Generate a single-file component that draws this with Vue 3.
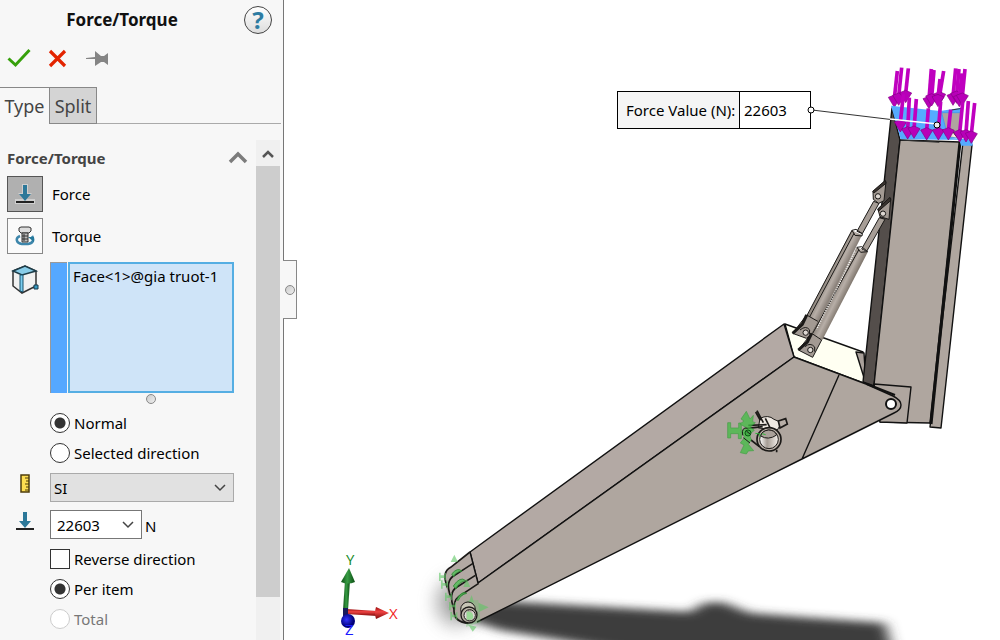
<script setup>
import { ref } from 'vue'

const tab = ref('Type')
const kind = ref('Force')
const direction = ref('normal')
const unit = ref('SI')
const value = ref('22603')
const reverse = ref(false)
const scope = ref('item')

// Load arrows: top x, top y, tip x, tip y
const backArrows = [
  [112, 48, 103, 154], [125, 38, 116, 148], [145, 40, 137, 140],
  [214, 42, 207, 158], [222, 45, 215, 150], [251, 48, 239, 144], [240, 72, 234, 152],
  [287, 40, 279, 148], [297, 42, 290, 142], [306, 55, 298, 152], [315, 42, 307, 148],
]
const frontArrows = [
  [130, 118, 121, 228], [148, 128, 143, 249], [169, 132, 162, 247],
  [205, 160, 200, 252], [242, 140, 235, 252], [272, 164, 265, 252],
  [308, 142, 299, 258], [325, 138, 318, 258], [344, 144, 334, 262],
]
const fingers = [
  'M382 142Q364 96 392 82L450 36',
  'M392 170Q374 122 404 106L459 70',
  'M402 208Q384 158 410 142L466 106',
  'M445 250Q404 246 402 214 400 182 416 170L476 130',
]
const marks = [[362, 110], [368, 133], [380, 170], [392, 198], [396, 228]]
</script>

<template>
  <main class="app">
    <aside class="panel">
      <header class="head">
        <h1>Force/Torque</h1>
        <button class="help" aria-label="Help">?</button>
      </header>
      <div class="actions">
        <button aria-label="OK">
          <svg width="24" height="24" viewBox="0 0 24 24"><path d="M1.500 11.500 8.500 18 22.500 3" fill="none" stroke="#36a00b" stroke-width="3" /></svg>
        </button>
        <button aria-label="Cancel">
          <svg width="24" height="24" viewBox="0 0 24 24"><path d="M4 4 19 19M19 4 4 19" fill="none" stroke="#e32400" stroke-width="3.200" /></svg>
        </button>
        <button aria-label="Keep visible">
          <svg width="24" height="24" viewBox="0 0 24 24"><path d="M1 11 10 10V4l6 5h3l4-3v12l-4-3h-3l-6 4v-7L1 12z" fill="#858585" /></svg>
        </button>
      </div>
      <nav class="tabs">
        <button :class="{ on: tab === 'Type' }" @click="tab = 'Type'">Type</button>
        <button :class="{ on: tab === 'Split' }" @click="tab = 'Split'">Split</button>
      </nav>

      <div class="body">
        <section class="group">
          <div class="group-head">
            <h2>Force/Torque</h2>
            <button aria-label="Collapse">
              <svg width="20" height="14" viewBox="0 0 20 14"><path d="M2 11 10 3l8 8" fill="none" stroke="#7c7c7c" stroke-width="3.500" /></svg>
            </button>
          </div>
          <div class="kind">
            <button id="force" :class="{ on: kind === 'Force' }" @click="kind = 'Force'">
              <svg width="20" height="20" viewBox="0 0 20 20"><path d="M7 0H13V9H17L10 17 3 9H7zM0 15H20V20H0z" fill="#ddd" opacity=".7" /><path d="M8 1h4v9h4l-6 7-6-7h4z" fill="#2c7899" /><path d="M1 17h18v2H1z" fill="#222" /></svg>
            </button>
            <label for="force">Force</label>
          </div>
          <div class="kind">
            <button id="torque" :class="{ on: kind === 'Torque' }" @click="kind = 'Torque'">
              <svg width="20" height="20" viewBox="0 0 20 20">
                <path d="M5 10C0 12 1 17 7 18h6c6-1 6-5 4-8" fill="none" stroke="#3d86ab" stroke-width="2.500" />
                <path d="M13 11h6v5z" fill="#24789b" />
                <path d="M4 2 6 1h8l2 1v3l-2 2H6L4 5z" fill="#ddd" stroke="#333" />
                <path d="M7 7h6v9H7z" fill="#bbb" stroke="#333" /><path d="M7 10h6M7 13h6M9 8v7" stroke="#333" />
              </svg>
            </button>
            <label for="torque">Torque</label>
          </div>

          <div class="pick">
            <svg width="28" height="30" viewBox="0 0 28 30">
              <path d="M2 6 14 1 25 6V21L11 28 2 21z" fill="#f1f1f1" stroke="#333" stroke-width="1.500" />
              <path d="M2 6 14 1 25 6 11 10z" fill="#88cde9" stroke="#1d3c48" stroke-width="1.500" />
              <path d="M9 10h3v17l-3-1z" fill="#7bcdf0" stroke="#17506b" /><path d="M23 20h4v4h-4z" fill="#379bc3" stroke="#16384a" />
            </svg>
            <div class="selection">
              <span class="swatch"></span>
              <ul role="listbox" aria-label="Faces"><li role="option" aria-selected="true">Face&lt;1&gt;@gia truot-1</li></ul>
            </div>
          </div>
          <span class="dot"></span>

          <div class="fields">
            <label class="option"><input v-model="direction" type="radio" name="direction" value="normal" />Normal</label>
            <label class="option"><input v-model="direction" type="radio" name="direction" value="selected" />Selected direction</label>
          </div>

          <div class="row">
            <svg width="12" height="20" viewBox="0 0 12 20"><path d="M2 1h8v17H2z" fill="#fddd51" stroke="#4d3c0b" stroke-width="1.500" /><path d="M6 4h4M7 7h3M6 10h4M7 13h3M6 16h4" stroke="#4d3c0b" /></svg>
            <div class="combo unit">
              <select v-model="unit" aria-label="Unit system"><option>SI</option><option>English</option></select>
              <svg width="14" height="8" viewBox="0 0 14 8"><path d="M2 1 7 6l5-5" fill="none" stroke="#444" stroke-width="1.500" /></svg>
            </div>
          </div>
          <div class="row">
            <svg width="20" height="20" viewBox="0 0 20 20"><path d="M8 1h4v9h4l-6 7-6-7h4z" fill="#2c7899" /><path d="M1 17h18v2H1z" fill="#222" /></svg>
            <div class="combo amount">
              <input v-model="value" aria-label="Force value" />
              <svg width="14" height="8" viewBox="0 0 14 8"><path d="M2 1 7 6l5-5" fill="none" stroke="#444" stroke-width="1.500" /></svg>
            </div>
            <span class="suffix">N</span>
          </div>

          <div class="fields last">
            <label class="option"><input v-model="reverse" type="checkbox" />Reverse direction</label>
            <label class="option"><input v-model="scope" type="radio" name="scope" value="item" />Per item</label>
            <label class="option off"><input v-model="scope" type="radio" name="scope" value="total" disabled />Total</label>
          </div>
        </section>
        <div class="scroll">
          <button aria-label="Scroll up"><svg width="14" height="10" viewBox="0 0 14 10"><path d="M2 9 7 4l5 5" fill="none" stroke="#555" stroke-width="2.500" /></svg></button>
          <div class="thumb"></div>
        </div>
      </div>
      <button class="handle" aria-label="Resize panel"><span class="dot"></span></button>
    </aside>

    <section class="stage">
      <svg class="model" viewBox="284 0 716 640" preserveAspectRatio="xMinYMin meet">
        <defs>
          <filter id="soft" filterUnits="userSpaceOnUse" x="400" y="540" width="600" height="180"><feGaussianBlur stdDeviation="7 4" /></filter>
          <filter id="wide" filterUnits="userSpaceOnUse" x="360" y="520" width="200" height="180"><feGaussianBlur stdDeviation="9" /></filter>
          <linearGradient id="tubeA" gradientUnits="userSpaceOnUse" x1="146" y1="310" x2="180" y2="327"><stop offset="0" stop-color="#8d857d" /><stop offset=".5" stop-color="#b7aea7" /><stop offset="1" stop-color="#857c75" /></linearGradient>
          <linearGradient id="tubeB" gradientUnits="userSpaceOnUse" x1="162" y1="360" x2="196" y2="377"><stop offset="0" stop-color="#8d857d" /><stop offset=".5" stop-color="#b7aea7" /><stop offset="1" stop-color="#81786f" /></linearGradient>
          <linearGradient id="bore"><stop offset="0" stop-color="#fff" /><stop offset=".4" stop-color="#a69d95" /><stop offset="1" stop-color="#f5f0ec" /></linearGradient>
          <linearGradient id="green"><stop offset="0" stop-color="#0b4d13" /><stop offset=".45" stop-color="#379c43" /><stop offset="1" stop-color="#0b4d13" /></linearGradient>
          <linearGradient id="red" x2="0" y2="1"><stop offset="0" stop-color="#9b0c0c" /><stop offset=".4" stop-color="#f04444" /><stop offset="1" stop-color="#7d0808" /></linearGradient>
          <radialGradient id="ball" cx=".4" cy=".4"><stop offset="0" stop-color="#3434ff" /><stop offset="1" stop-color="#000077" /></radialGradient>
        </defs>

        <ellipse cx="456" cy="602" rx="20" ry="24" fill="#777" opacity=".6" filter="url(#wide)" />
        <path d="M455 602 500 601 690 612 704 603 722 602 750 613 800 617 885 623 895 660H680L500 630 470 620z" fill="#3d3d3d" filter="url(#soft)" />

        <g class="edge">
          <path d="M785 324 863 352 866 384 794 357z" fill="#fffff2" />
          <path d="M856 352 864 353 866 384z" fill="#aaa19b" />
          <path d="M892 108 900 140 874 386 863 382z" fill="#544e4b" />
          <path d="M900 140 960 142 930 423 880 422 874 385z" fill="#afa69f" />
          <path d="M963 142 972 145 941 428 930 427z" fill="#afa69f" />
          <path d="M960 142 931 424" stroke-width="3" />
          <path d="M874 384 911 387 907 423 880 422z" fill="#afa69f" />
          <path d="M470 552 784 324 794 357 478 583z" fill="#b3a9a4" />
          <path d="M470 552 451 567C443 571 444 582 447 590L450 610Q455 624 467 623L477 621 478 583z" fill="#b3a9a4" stroke="none" />
          <path d="M478 583 794 357 866 384 893 396Q901 400 901 405T894 413L802 459 477 622Q455 625 454 610 452 598 459 596z" fill="#afa69f" stroke="none" />
          <path d="M478 583 794 357 866 384 893 396Q901 400 901 405T894 413L802 459 477 622M470 552 478 583M839 375 802 459" fill="none" />
          <path d="M867 384 895 395" stroke-width="2" />
          <circle cx="891" cy="404" r="5" fill="#fff" stroke-width="2" />
        </g>

        <!-- hydraulic cylinders -->
        <g class="fine" transform="translate(780 170) scale(.33333)">
          <path d="M281 94 231 184 247 191 297 100z" fill="#a69d96" />
          <path d="M215 181 246 195 116 459 79 440z" fill="url(#tubeA)" stroke="none" />
          <path d="M216 181 80 438M222 190 86 446M216 181 228 178 247 191 246 198 225 196z" fill="none" />
          <path d="M318 35 279 65 280 88 296 100 312 92z" fill="#a39a93" /><path d="M278 64 316 31 318 40 282 69z" fill="#39332f" />
          <path d="M80 435 38 490 79 505 96 492 115 455z" fill="#a39a93" /><path d="M80 435 67 463 38 490" stroke-width="9" fill="none" />
          <path d="M298 143 245 237 260 244 315 148z" fill="#a69d96" />
          <path d="M230 232 263 247 127 510 94 491z" fill="url(#tubeB)" stroke="none" />
          <path d="M236 240 98 490M231 232 245 230 263 245 242 247z" fill="none" />
          <path d="M225 245 110 478" stroke="#fff" stroke-width="4" stroke-dasharray="3 4" />
          <path d="M332 85 294 118 300 140 327 148z" fill="#a39a93" /><path d="M293 117 330 82 333 91 296 123z" fill="#39332f" />
          <path d="M95 490 55 540 98 562 125 510z" fill="#a39a93" /><path d="M95 490 82 516 55 540" stroke-width="9" fill="none" />
          <g fill="#ded8d2"><circle cx="294" cy="79" r="8" /><circle cx="309" cy="131" r="8" /><circle cx="77" cy="488" r="8" /><circle cx="91" cy="540" r="8" /></g>
          <path d="M60 480Q78 465 89 480L88 493M75 530Q91 516 104 531L104 545" fill="none" />
        </g>

        <!-- loaded face and force arrows -->
        <g transform="translate(860 55) scale(.33333)">
          <g v-for="(a, i) in backArrows" :key="'b' + i" class="load">
            <path :d="`M${a[0]} ${a[1]} L${a[2]} ${a[3] - 24}`" />
            <path class="cone" :d="`M${a[2] - 18} ${a[3] - 27}l18-7 18 8-18 29z`" />
          </g>
          <path d="M93 152 240 168 305 158V173H245L264 248 338 254V272H303L298 254H240L122 253z" fill="#55aaff" />
          <path d="M245 173H304L300 248 264 248z" fill="#afa69f" stroke="#4499e8" stroke-width="3" />
          <path d="M264 242 278 230 292 248" fill="#f4eadd" stroke="#222" stroke-width="3" />
          <path d="M122 255 238 262M275 165 306 160" fill="none" stroke="#333" stroke-width="3" />
          <g v-for="(a, i) in frontArrows" :key="'f' + i" class="load">
            <path :d="`M${a[0]} ${a[1]} L${a[2]} ${a[3] - 24}`" />
            <path class="cone" :d="`M${a[2] - 18} ${a[3] - 27}l18-7 18 8-18 29z`" />
          </g>
        </g>
        <path d="M812 110 895 120" stroke="#333" />
        <path d="M890 119 937 124" stroke="#fff" stroke-width="1.500" />
        <circle cx="937" cy="125" r="3" fill="#eee" stroke="#000" />

        <!-- lug with bushing and fixture -->
        <g class="fine" transform="translate(700 340) scale(.33333)">
          <path d="M180 235Q205 223 222 238L245 248 232 270 175 264z" fill="#eee8e1" />
          <path d="M235 243 257 236 262 252 240 264z" fill="#b7aea7" stroke-width="5" />
          <path d="M171 212 190 248M167 216 181 241" stroke-width="5" />
          <path d="M145 256 200 254M143 265 188 260M153 300 178 320M196 235 212 267M230 329V337" stroke-width="5" />
          <ellipse cx="207" cy="298" rx="36" ry="35" fill="#bcb2aa" stroke-width="5" />
          <ellipse cx="207" cy="298" rx="28" ry="28" fill="url(#bore)" stroke-width="3" />
          <path d="M182 288Q205 302 230 285Q224 270 205 270 185 273 182 288z" fill="#aaa19a" />
          <g fill="#42bd43" stroke="#239b2a" stroke-width="2" opacity=".75">
            <path d="M83 248H92V264H116V249H124V296H115V281H92V294H83z" />
            <path d="M139 214 150 237 160 226 158 245 166 248 151 261 163 271 148 283 154 299 145 313 161 332 145 333 139 342 121 338 132 315 121 309 134 292 124 275 139 263 120 252 132 243 123 237z" />
          </g>
          <circle cx="144" cy="279" r="9" fill="#41a844" stroke="#065a10" /><path d="M128 286Q124 259 143 265M130 293 150 309M139 273 150 282" fill="none" />
          <path d="M166 280 180 282 179 290M186 281 197 284" stroke="#31b63b" fill="none" />
        </g>

        <!-- hinge fingers and their fixtures -->
        <g class="fine" transform="translate(320 540) scale(.33333)">
          <path v-for="f in fingers" :key="f" :d="f" fill="none" stroke-width="5" />
          <g fill="#57bd5b" stroke="#2a8d30" opacity=".85">
            <path d="M395 102Q414 80 426 94 408 94 401 110zM400 138Q421 107 437 122 417 125 408 147zM410 180Q423 151 440 160 422 164 415 181z" />
          </g>
          <g fill="#5fc764" stroke="none" opacity=".6">
            <path d="M403 44 414 66H392zM440 116 451 141H430zM455 165 462 187H446zM475 188 506 202 477 216zM445 254 470 260 458 275z" />
            <path v-for="(m, i) in marks" :key="i" :d="`M${m[0] - 5} ${m[1] - 12}h5v8h12v-7h4v22h-4v-7h-12v9h-5z`" />
            <path d="M440 182 475 180 482 247 438 261z" opacity=".5" />
          </g>
          <circle cx="444" cy="208" r="22" fill="#c7c5b5" /><circle cx="447" cy="225" r="24" fill="#b9b3a6" stroke-width="4" /><circle cx="449" cy="226" r="17" fill="url(#bore)" /><path d="M440 215Q455 212 459 225T450 239H440z" fill="#9ada96" stroke="none" />
        </g>

        <!-- axis triad -->
        <path d="M345 580H350L348 611H343z" fill="url(#green)" /><path d="M349 568 355 582Q348 585 341 582z" fill="url(#green)" />
        <path d="M346 609 377 611V616L346 614z" fill="url(#red)" /><path d="M376 607 389 613 376 619Q374 613 376 607z" fill="url(#red)" />
        <path d="M343 608H348V620H343z" fill="#19195c" /><circle cx="348" cy="621" r="7" fill="url(#ball)" />
        <g class="axis"><text x="346" y="565" fill="#178a27">Y</text><text x="389" y="619" fill="#f12222">X</text><text x="345" y="635" fill="#1a1aff">Z</text></g>

        <foreignObject x="617" y="91" width="194" height="38">
          <label class="callout"><span>Force Value (N):</span><input v-model="value" /></label>
        </foreignObject>
        <circle cx="811" cy="110" r="3" fill="#fff" stroke="#000" />
      </svg>
    </section>
  </main>
</template>

<style scoped>
.app { display: flex; min-height: 100vh; background: #fff; color: #000; font: 15px/20px "Noto Sans", "Open Sans", sans-serif; }
button, input, select { font: inherit; color: inherit; margin: 0; padding: 0; box-sizing: border-box; }
button { background: none; border: 0; display: flex; align-items: center; justify-content: center; }
svg { display: block; flex: none; }
.panel { position: relative; display: flex; flex-direction: column; box-sizing: border-box; width: 284px; flex: none; background: #f7f7f7; border-right: 1px solid #777; }
.head { display: flex; align-items: center; height: 40px; padding-right: 11px; }
h1 { flex: 1; margin: 0; text-align: center; font-size: 17px; font-weight: 700; color: #111; }
.help { width: 28px; height: 28px; border: 1px solid #444; border-radius: 50%; background: linear-gradient(#fff, #ddd); color: #2d7ca2; font-size: 24px; font-weight: 700; line-height: 26px; }
.actions { display: flex; gap: 15px; height: 47px; align-items: center; padding: 0 7px 10px; box-sizing: border-box; }
.tabs { display: flex; height: 37px; margin-right: 2px; color: #444; font-size: 18px; }
.tabs::after { content: ""; flex: 1; border-bottom: 1px solid #aaa; }
.tabs button { width: 48px; border: 1px solid #888; background: #d4d4d4; }
.tabs button.on { width: 49px; background: none; border-width: 1px 0 0; }
.body { display: flex; flex: 1; margin-top: 16px; }
.group { flex: 1; padding-left: 7px; }
.group-head { display: flex; align-items: center; justify-content: space-between; height: 36px; padding-right: 8px; }
h2 { margin: 0; font-size: 15px; font-weight: 700; color: #444; }
.kind { display: flex; align-items: center; gap: 9px; margin-bottom: 6px; }
.kind button { width: 36px; height: 36px; border: 1px solid #888; background: #fafafa; }
.kind button.on { background: #b0b0b0; border-color: #555; }
.pick { display: flex; gap: 11px; margin-top: 8px; padding: 0 22px 0 4px; }
.pick svg { margin-top: 3px; }
.selection { display: flex; flex: 1; height: 131px; gap: 1px; }
.swatch { width: 17px; background: #55a8ff; border: solid #999; border-width: 1px 0 0 1px; box-sizing: border-box; }
ul { flex: 1; margin: 0; padding: 2px 3px; list-style: none; background: #cfe4f8; border: 2px solid #55aee3; box-sizing: border-box; white-space: nowrap; }
.dot { display: block; box-sizing: border-box; width: 10px; height: 10px; border: 1px solid #888; border-radius: 50%; background: linear-gradient(135deg, #ccc, #eee); }
.group > .dot { margin: 1px 0 4px 139px; }
.fields { padding-left: 43px; }
.option { display: flex; align-items: center; gap: 4px; height: 30px; }
.option input { appearance: none; width: 20px; height: 20px; border: 1px solid #333; background: #fff; }
.option input[type="radio"] { border-radius: 50%; }
.option input[type="radio"]:checked { background: radial-gradient(circle, #333 0 5px, #fff 6px); }
.option input[type="checkbox"]:checked { background: #333; }
.off { color: #777; }
.option.off input { border-color: #ccc; }
.row { display: flex; align-items: center; margin-top: 5px; padding-right: 22px; }
.row + .row { margin-top: 8px; }
.row > svg { width: 36px; margin: 0 7px 8px 0; }
.combo { display: grid; align-items: center; }
.combo > * { grid-area: 1 / 1; }
.combo svg { justify-self: end; margin-right: 7px; pointer-events: none; }
.combo select, .combo input { appearance: none; width: 100%; height: 29px; border: 1px solid #777; border-radius: 0; background: #fff; padding-left: 6px; }
.unit { flex: 1; }
.combo select { background: #e1e1e1; border-color: #aaa; padding-left: 3px; }
.amount { width: 92px; }
.suffix { margin-left: 3px; padding-top: 3px; }
.last { margin-top: 5px; }
.scroll { width: 24px; margin-right: 3px; background: #f0f0f0; }
.scroll button { width: 24px; height: 26px; }
.thumb { height: 431px; background: #cdcdcd; }
.handle { position: absolute; left: 283px; top: 260px; width: 14px; height: 59px; border: 1px solid #888; border-left: 0; background: #f7f7f7; }
.stage { flex: 1; min-width: 0; }
.model { width: 100%; height: auto; }
.edge { stroke: #111; stroke-width: 1.400; stroke-linejoin: round; }
.fine { stroke: #1b1917; stroke-width: 3; }
.load { stroke: #bf00bf; stroke-width: 11; fill: none; }
.load .cone { fill: #b800b8; stroke: #850085; stroke-width: 2; }
.axis { font: 15px "Open Sans", sans-serif; }
.callout { display: flex; box-sizing: border-box; height: 38px; border: 1px solid #000; background: #f5f5f5; line-height: 36px; white-space: nowrap; }
.callout span { width: 121px; padding-left: 8px; box-sizing: border-box; }
.callout input { flex: 1; min-width: 0; border: 0; border-left: 1px solid #000; border-radius: 0; background: #fff; padding-left: 4px; }
</style>
